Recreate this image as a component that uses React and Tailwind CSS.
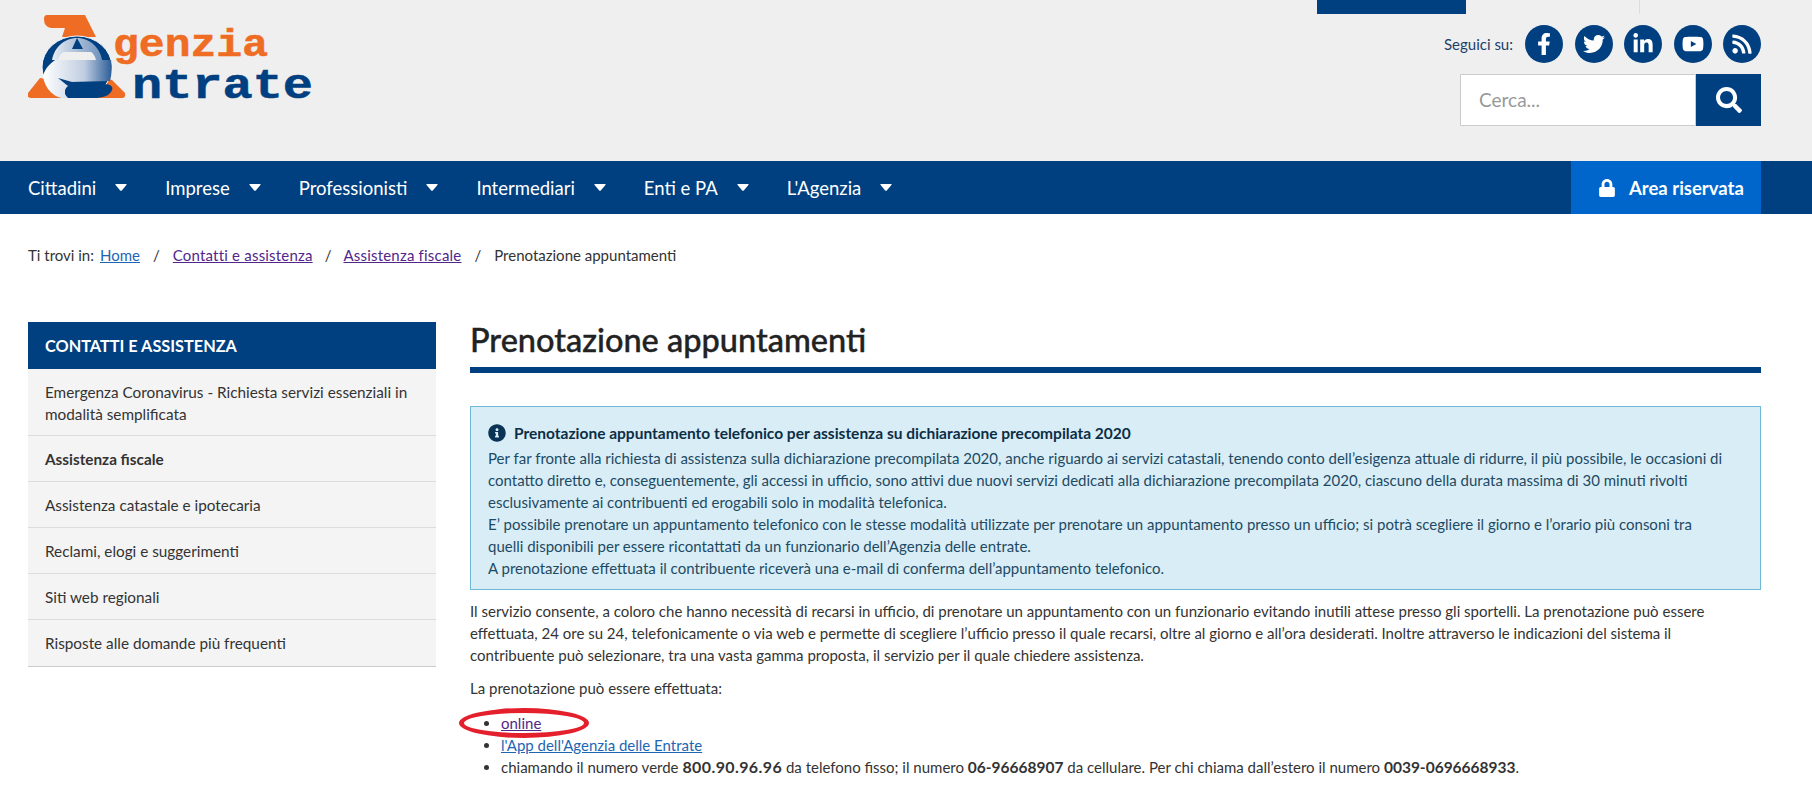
// Agenzia Entrate - prenotazione appuntamenti
import { FaFacebookF, FaTwitter, FaLinkedinIn, FaYoutube, FaRss, FaSearch, FaLock, FaInfoCircle } from "react-icons/fa";

const navItems = ["Cittadini", "Imprese", "Professionisti", "Intermediari", "Enti e PA", "L'Agenzia"];
const socials = [FaFacebookF, FaTwitter, FaLinkedinIn, FaYoutube, FaRss];
const sideItems = ["Assistenza fiscale", "Assistenza catastale e ipotecaria", "Reclami, elogi e suggerimenti", "Siti web regionali", "Risposte alle domande più frequenti"];

function Logo() {
    return (
        <svg width="290" height="100" viewBox="0 0 290 100" className="block">
            <defs>
                <linearGradient id="eGrad" gradientUnits="userSpaceOnUse" x1="15" x2="84" y1="0" y2="0">
                    <stop offset="0" stopColor="#ffffff" />
                    <stop offset="0.6" stopColor="#c0cde0" />
                    <stop offset="1" stopColor="#2a5c98" />
                </linearGradient>
                <linearGradient id="eTop" gradientUnits="userSpaceOnUse" x1="24" x2="74" y1="0" y2="0">
                    <stop offset="0" stopColor="#e8ecf3" />
                    <stop offset="1" stopColor="#6f92bd" />
                </linearGradient>
            </defs>
            {/* orange A, top and feet */}
            <path d="M19 1 H57 L68 23 H34 L37 14 H23 Q16 13 16 5 Q16 1 19 1 Z" fill="#ee6c23" />
            <path d="M12 64 L0 79 Q-1 84 3 84 H34 L24 66 Z" fill="#ee6c23" />
            <path d="M72 63 L84 66 L97 79 Q98 84 94 84 H68 Z" fill="#ee6c23" />
            {/* blue ring with the gradient e */}
            <ellipse cx="49" cy="53" rx="35" ry="31" fill="#004080" stroke="#f6f7fa" strokeWidth="1" />
            <path d="M24 46 C26 34 36 24 49 24 C62 24 72 34 74 46 Z" fill="url(#eTop)" />
            <path d="M49 24 L55 35 H44 Z" fill="#004080" />
            <path d="M30 46 C31 42 33 39 36 38 H63 C65 39 67 42 68 46 Z" fill="#efefef" />
            <path d="M27 46 H83 C84 52 84 60 82 67 L42 68 L40 72 C36 75 36 80 40 84 C28 86 17 76 15 62 C17 54 22 50 27 46 Z" fill="url(#eGrad)" />
            <path d="M30 64 L44 68 L40 72 Z" fill="#004080" />
            <path d="M40 73 L74 71 C80 69 86 72 84 76 C82 82 74 84 66 84 H40 C36 80 36 77 40 73 Z" fill="#004080" />
            <text x="85" y="42" fontFamily="'Liberation Mono', monospace" fontWeight="700" fontSize="38" textLength="155" lengthAdjust="spacingAndGlyphs" fill="#ee6c23" stroke="#ee6c23" strokeWidth="0.5">genzia</text>
            <text x="104" y="84" fontFamily="'Liberation Mono', monospace" fontWeight="700" fontSize="43" textLength="181" lengthAdjust="spacingAndGlyphs" fill="#004080" stroke="#004080" strokeWidth="0.5">ntrate</text>
        </svg>
    );
}

function Caret() {
    return (
        <svg width="12" height="7" viewBox="0 0 12 7" className="ml-[19px]">
            <path d="M1 0 H11 Q12.2 0 11.4 1 L6.8 6.4 Q6 7.2 5.2 6.4 L0.6 1 Q-0.2 0 1 0 Z" fill="#fff" />
        </svg>
    );
}

export default function App() {
    return (
        <div className="h-screen overflow-hidden bg-white font-['Lato',sans-serif] text-[15px] leading-[22px] text-[#333]">
            {/* header */}
            <header className="h-[161px] bg-[#efefef] pl-[28px] pr-[51px] flex justify-between">
                <div className="pt-[14px]">
                    <Logo />
                </div>
                <div className="w-[444px] flex flex-col items-end">
                    <div className="flex w-full h-[14px]">
                        <div className="w-[149px] bg-[#004080]" />
                        <div className="w-[174px] border-r border-[#ddd]" />
                    </div>
                    <div className="flex items-center mt-[11px]">
                        <span className="text-[#1d3f6b] text-[15px] mr-[12px]">Seguici su:</span>
                        <div className="flex gap-[11.5px]">
                            {socials.map((Icon, i) => (
                                <span key={i} className="w-[38px] h-[38px] rounded-full bg-[#004080] text-white flex items-center justify-center">
                                    <Icon size={22} />
                                </span>
                            ))}
                        </div>
                    </div>
                    <div className="flex mt-[11px] h-[52px]">
                        <div className="w-[236px] border border-[#ccc] bg-white flex items-center pl-[18px] text-[19px] text-[#999]">
                            Cerca...
                        </div>
                        <div className="w-[65px] bg-[#004080] text-white flex items-center justify-center">
                            <FaSearch size={26} />
                        </div>
                    </div>
                </div>
            </header>

            {/* nav */}
            <nav className="h-[53px] bg-[#004080] pl-[28px] pr-[51px] flex justify-between text-white">
                <ul className="flex items-center gap-[38px]">
                    {navItems.map((item) => (
                        <li key={item} className="flex items-center text-[18.5px]">
                            {item}
                            <Caret />
                        </li>
                    ))}
                </ul>
                <div className="w-[190px] bg-[#0066cc] flex items-center pl-[27px] gap-[13px] text-[18.5px] font-bold">
                    <FaLock size={18} />
                    Area riservata
                </div>
            </nav>

            {/* breadcrumb */}
            <div className="px-[28px] pt-[30px] h-[108px] flex text-[#333]">
                <span>Ti trovi in:</span>
                <a className="ml-[6px] text-[#1d66b3] underline">Home</a>
                <span className="mx-[13px]">/</span>
                <a className="text-[#52268a] underline tracking-[0.2px]">Contatti e assistenza</a>
                <span className="mx-[12px]">/</span>
                <a className="text-[#52268a] underline tracking-[0.2px]">Assistenza fiscale</a>
                <span className="mx-[13px]">/</span>
                <span>Prenotazione appuntamenti</span>
            </div>

            <div className="pl-[28px] pr-[51px] flex gap-[34px] items-start">
                {/* sidebar */}
                <aside className="w-[408px] shrink-0 text-[15.3px]">
                    <h3 className="h-[47px] bg-[#004080] text-white font-bold text-[16.3px] flex items-center px-[17px]">CONTATTI E ASSISTENZA</h3>
                    <ul className="bg-[#f4f4f4] border-b border-[#ccc]">
                        <li className="h-[67px] px-[17px] pt-[12px] border-b border-[#ddd]">
                            Emergenza Coronavirus - Richiesta servizi essenziali in<br />modalità semplificata
                        </li>
                        {sideItems.map((item, i) => (
                            <li key={item} className={`h-[46px] px-[17px] flex items-center ${i === 0 ? "font-bold" : ""} ${i < 4 ? "border-b border-[#ddd]" : ""}`}>
                                {item}
                            </li>
                        ))}
                    </ul>
                </aside>

                {/* main */}
                <main className="flex-1 min-w-0">
                    <h1 className="text-[32.5px] leading-[36px] font-medium text-[#222] [-webkit-text-stroke:0.4px_#222] border-b-[6px] border-[#004080] h-[51px]">Prenotazione appuntamenti</h1>

                    <div className="mt-[33px] h-[184px] bg-[#d9edf7] border border-[#6db9d6] px-[17px] pt-[15px] text-[#1d4a63] whitespace-nowrap">
                        <div className="flex items-center font-bold text-[15.5px] text-[#0b2e45] mb-[3px]">
                            <FaInfoCircle size={18} className="mr-[8px] text-[#0b3355]" />
                            Prenotazione appuntamento telefonico per assistenza su dichiarazione precompilata 2020
                        </div>
                        Per far fronte alla richiesta di assistenza sulla dichiarazione precompilata 2020, anche riguardo ai servizi catastali, tenendo conto dell’esigenza attuale di ridurre, il più possibile, le occasioni di<br />
                        contatto diretto e, conseguentemente, gli accessi in ufficio, sono attivi due nuovi servizi dedicati alla dichiarazione precompilata 2020, ciascuno della durata massima di 30 minuti rivolti<br />
                        esclusivamente ai contribuenti ed erogabili solo in modalità telefonica.<br />
                        E’ possibile prenotare un appuntamento telefonico con le stesse modalità utilizzate per prenotare un appuntamento presso un ufficio; si potrà scegliere il giorno e l’orario più consoni tra<br />
                        quelli disponibili per essere ricontattati da un funzionario dell’Agenzia delle entrate.<br />
                        A prenotazione effettuata il contribuente riceverà una e-mail di conferma dell’appuntamento telefonico.
                    </div>

                    <p className="mt-[10px] whitespace-nowrap">
                        Il servizio consente, a coloro che hanno necessità di recarsi in ufficio, di prenotare un appuntamento con un funzionario evitando inutili attese presso gli sportelli. La prenotazione può essere<br />
                        effettuata, 24 ore su 24, telefonicamente o via web e permette di scegliere l’ufficio presso il quale recarsi, oltre al giorno e all’ora desiderati. Inoltre attraverso le indicazioni del sistema il<br />
                        contribuente può selezionare, tra una vasta gamma proposta, il servizio per il quale chiedere assistenza.
                    </p>
                    <p className="mt-[11px]">La prenotazione può essere effettuata:</p>
                    <ul className="mt-[13px] pl-[31px] list-disc whitespace-nowrap">
                        <li className="relative">
                            <a className="text-[#52268a] underline">online</a>
                            {/* red hand-drawn circle */}
                            <span className="absolute left-[-42px] top-[-4px] w-[130px] h-[30px] rounded-[50%] border-[5px] border-[#e3202c]" />
                        </li>
                        <li><a className="text-[#1d66b3] underline">l'App dell'Agenzia delle Entrate</a></li>
                        <li>chiamando il numero verde <b className="text-[16px] tracking-[0.4px]">800.90.96.96</b> da telefono fisso; il numero <b className="text-[15.5px]">06-96668907</b> da cellulare. Per chi chiama dall’estero il numero <b className="text-[15.5px]">0039-0696668933</b>.</li>
                    </ul>
                </main>
            </div>
        </div>
    );
}
